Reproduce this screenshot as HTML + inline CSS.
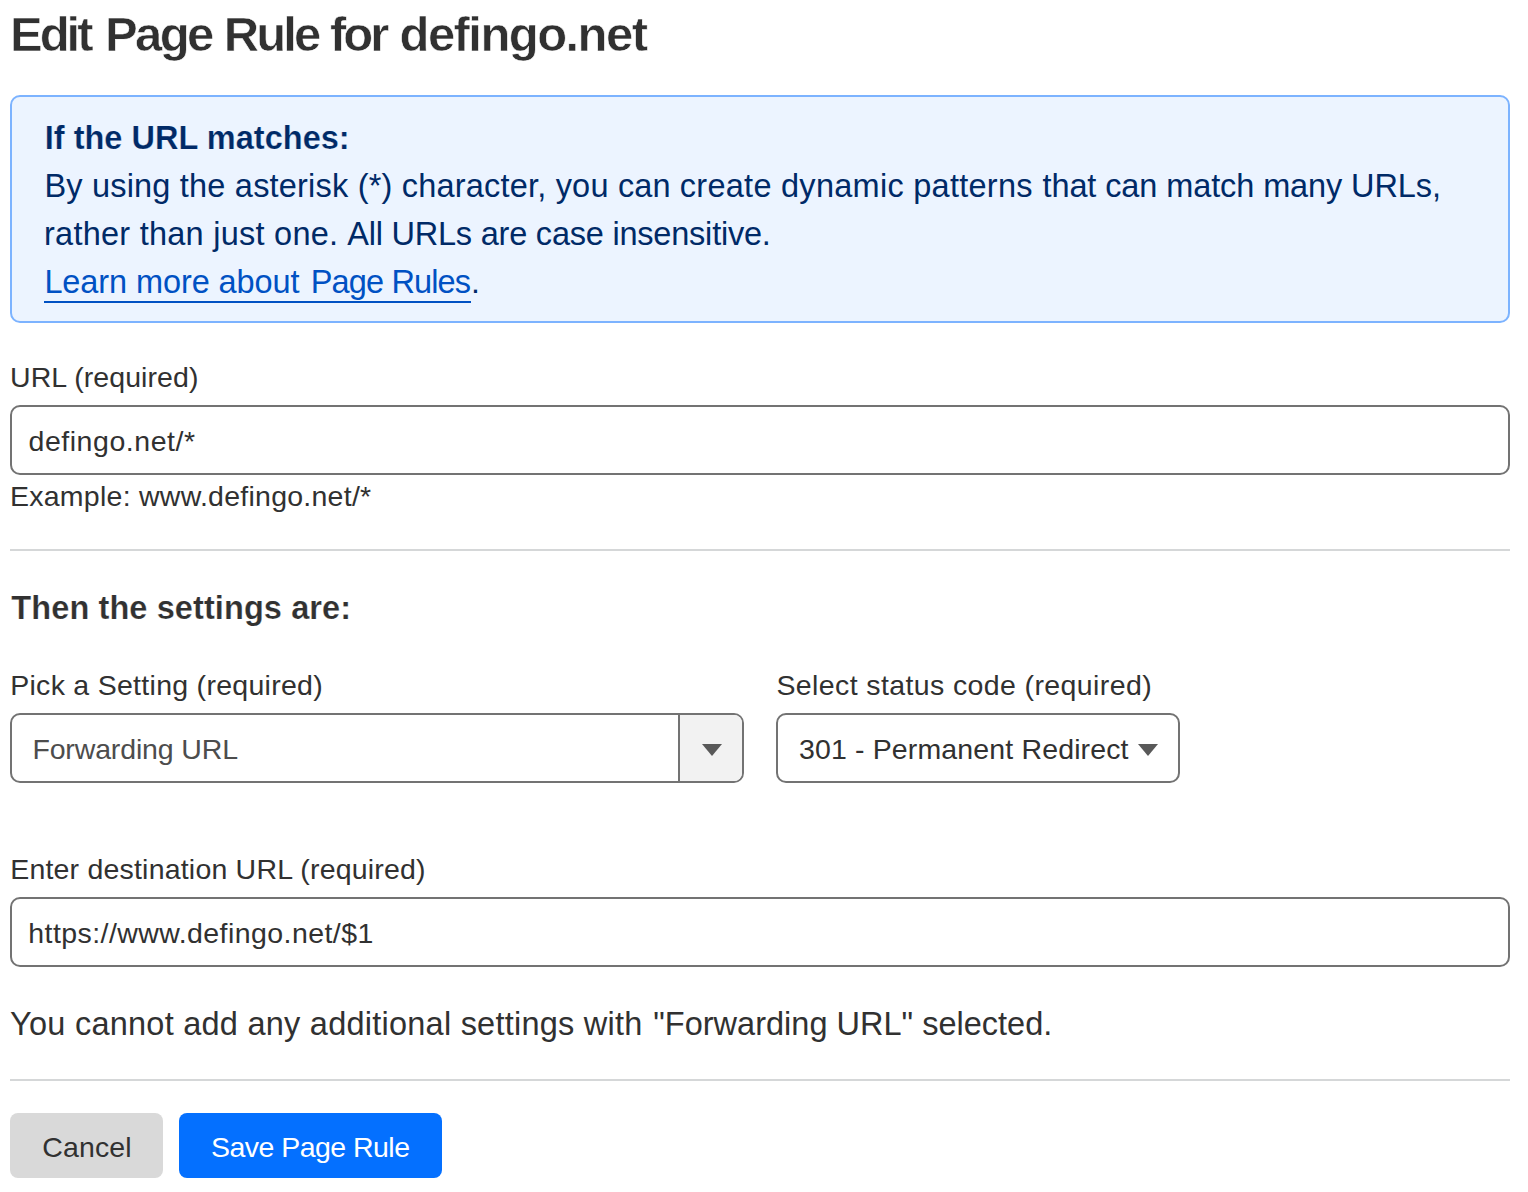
<!DOCTYPE html>
<html><head><meta charset="utf-8">
<style>
html,body{margin:0;padding:0;background:#fff;}
body{width:1528px;height:1192px;position:relative;overflow:hidden;font-family:"Liberation Sans",sans-serif;color:#313131;}
.t{position:absolute;white-space:pre;line-height:1;}
.box{position:absolute;box-sizing:border-box;}
#info{left:10px;top:95px;width:1500px;height:228px;background:#ecf4ff;border:2px solid #7cb3ff;border-radius:10px;}
.inp{left:10px;width:1500px;height:70px;border:2px solid #737373;border-radius:10px;background:#fff;}
.hr{left:10px;width:1500px;height:2px;background:#d5d7d8;}
#sel1{left:10px;top:713px;width:734px;height:70px;border:2px solid #737373;border-radius:10px;background:#fff;overflow:hidden;}
#sel1 .dd{position:absolute;left:666px;top:0;width:64px;height:66px;background:#f2f2f2;border-left:2px solid #737373;}
#sel2{left:776px;top:713px;width:404px;height:70px;border:2px solid #737373;border-radius:10px;background:#fff;}
.tri{position:absolute;width:0;height:0;border-left:10px solid transparent;border-right:10px solid transparent;border-top:12px solid #595959;}
#cancel{left:10px;top:1113px;width:153px;height:65px;background:#d9d9d9;border-radius:8px;}
#save{left:179px;top:1113px;width:263px;height:65px;background:#0470ff;border-radius:8px;}
#ul{left:44px;top:301px;width:427px;height:2px;background:#0051c3;}
</style></head><body>
<div class="box" id="info"></div>
<div class="box" id="ul"></div>
<div class="t" style="left:471px;top:266px;font-size:32px;color:#002a67">.</div>
<div class="box inp" style="top:405px"></div>
<div class="box hr" style="top:549px"></div>
<div class="box" id="sel1"><div class="dd"></div></div>
<div class="tri" style="left:702px;top:744px"></div>
<div class="box" id="sel2"></div>
<div class="tri" style="left:1138px;top:744px"></div>
<div class="box inp" style="top:897px"></div>
<div class="box hr" style="top:1079px"></div>
<div class="box" id="cancel"></div>
<div class="box" id="save"></div>
<div class="t" id="t_title1" style="left:10.00px;top:10px;font-size:49px;font-weight:700;letter-spacing:-3.033px;color:#313131;-webkit-text-stroke:0.55px #fff">Edit</div>
<div class="t" id="t_title2" style="left:105.00px;top:10px;font-size:49px;font-weight:700;letter-spacing:-2.600px;color:#313131;-webkit-text-stroke:0.55px #fff">Page</div>
<div class="t" id="t_title3" style="left:223.80px;top:10px;font-size:49px;font-weight:700;letter-spacing:-2.933px;color:#313131;-webkit-text-stroke:0.55px #fff">Rule</div>
<div class="t" id="t_title4" style="left:330.00px;top:10px;font-size:49px;font-weight:700;letter-spacing:-3.000px;color:#313131;-webkit-text-stroke:0.55px #fff">for</div>
<div class="t" id="t_title5" style="left:399.50px;top:10px;font-size:49px;font-weight:700;letter-spacing:-1.550px;color:#313131;-webkit-text-stroke:0.55px #fff">defingo.net</div>
<div class="t" id="t_ifurl" style="left:44.70px;top:122px;font-size:32.5px;font-weight:700;letter-spacing:0.022px;color:#002a67;-webkit-text-stroke:0.2px #ecf4ff">If the URL matches:</div>
<div class="t" id="t_p1a" style="left:44.40px;top:170px;font-size:32.5px;font-weight:400;letter-spacing:0.198px;color:#002a67">By using the asterisk (*) character, you can</div>
<div class="t" id="t_p1b" style="left:679.80px;top:170px;font-size:32.5px;font-weight:400;letter-spacing:0.268px;color:#002a67">create dynamic patterns</div>
<div class="t" id="t_p1c" style="left:1042.50px;top:170px;font-size:32.5px;font-weight:400;letter-spacing:-0.104px;color:#002a67">that can match many URLs,</div>
<div class="t" id="t_p2a" style="left:44.00px;top:218px;font-size:32.5px;font-weight:400;letter-spacing:0.250px;color:#002a67">rather than just one.</div>
<div class="t" id="t_p2b" style="left:347.20px;top:218px;font-size:32.5px;font-weight:400;letter-spacing:-0.214px;color:#002a67">All URLs are case insensitive.</div>
<div class="t" id="t_link1" style="left:44.40px;top:266px;font-size:32.5px;font-weight:400;letter-spacing:-0.093px;color:#0051c3">Learn more about</div>
<div class="t" id="t_link2" style="left:310.80px;top:266px;font-size:32.5px;font-weight:400;letter-spacing:-0.867px;color:#0051c3">Page Rules</div>
<div class="t" id="t_urllbl" style="left:10.00px;top:363px;font-size:28.5px;font-weight:400;letter-spacing:0.077px;">URL (required)</div>
<div class="t" id="t_inp1" style="left:28.50px;top:427px;font-size:28.5px;font-weight:400;letter-spacing:0.542px;">defingo.net/*</div>
<div class="t" id="t_example" style="left:10.00px;top:482px;font-size:28.5px;font-weight:400;letter-spacing:0.252px;">Example: www.defingo.net/*</div>
<div class="t" id="t_then" style="left:11.30px;top:592px;font-size:32.5px;font-weight:700;letter-spacing:0.100px;;-webkit-text-stroke:0.2px #fff">Then the settings are:</div>
<div class="t" id="t_pick" style="left:10.20px;top:671px;font-size:28.5px;font-weight:400;letter-spacing:0.283px;">Pick a Setting (required)</div>
<div class="t" id="t_fwd" style="left:32.40px;top:735px;font-size:28.5px;font-weight:400;letter-spacing:-0.146px;color:#4d4d4d">Forwarding URL</div>
<div class="t" id="t_selst" style="left:776.40px;top:671px;font-size:28.5px;font-weight:400;letter-spacing:0.389px;">Select status code (required)</div>
<div class="t" id="t_s301" style="left:799.00px;top:735px;font-size:28.5px;font-weight:400;letter-spacing:0.139px;">301 - Permanent Redirect</div>
<div class="t" id="t_enter" style="left:10.20px;top:855px;font-size:28.5px;font-weight:400;letter-spacing:0.200px;">Enter destination URL (required)</div>
<div class="t" id="t_inp2" style="left:28.30px;top:919px;font-size:28.5px;font-weight:400;letter-spacing:0.428px;">https://www.defingo.net/$1</div>
<div class="t" id="t_cannot1" style="left:10.10px;top:1008px;font-size:32.5px;font-weight:400;letter-spacing:0.240px;">You cannot add any additional settings with</div>
<div class="t" id="t_cannot2" style="left:653.30px;top:1008px;font-size:32.5px;font-weight:400;letter-spacing:0.008px;">"Forwarding URL" selected.</div>
<div class="t" id="t_cancel" style="left:42.20px;top:1133px;font-size:28.5px;font-weight:400;letter-spacing:0.160px;">Cancel</div>
<div class="t" id="t_save" style="left:211.00px;top:1133px;font-size:28.5px;font-weight:400;letter-spacing:-0.538px;color:#fff">Save Page Rule</div>
</body></html>
